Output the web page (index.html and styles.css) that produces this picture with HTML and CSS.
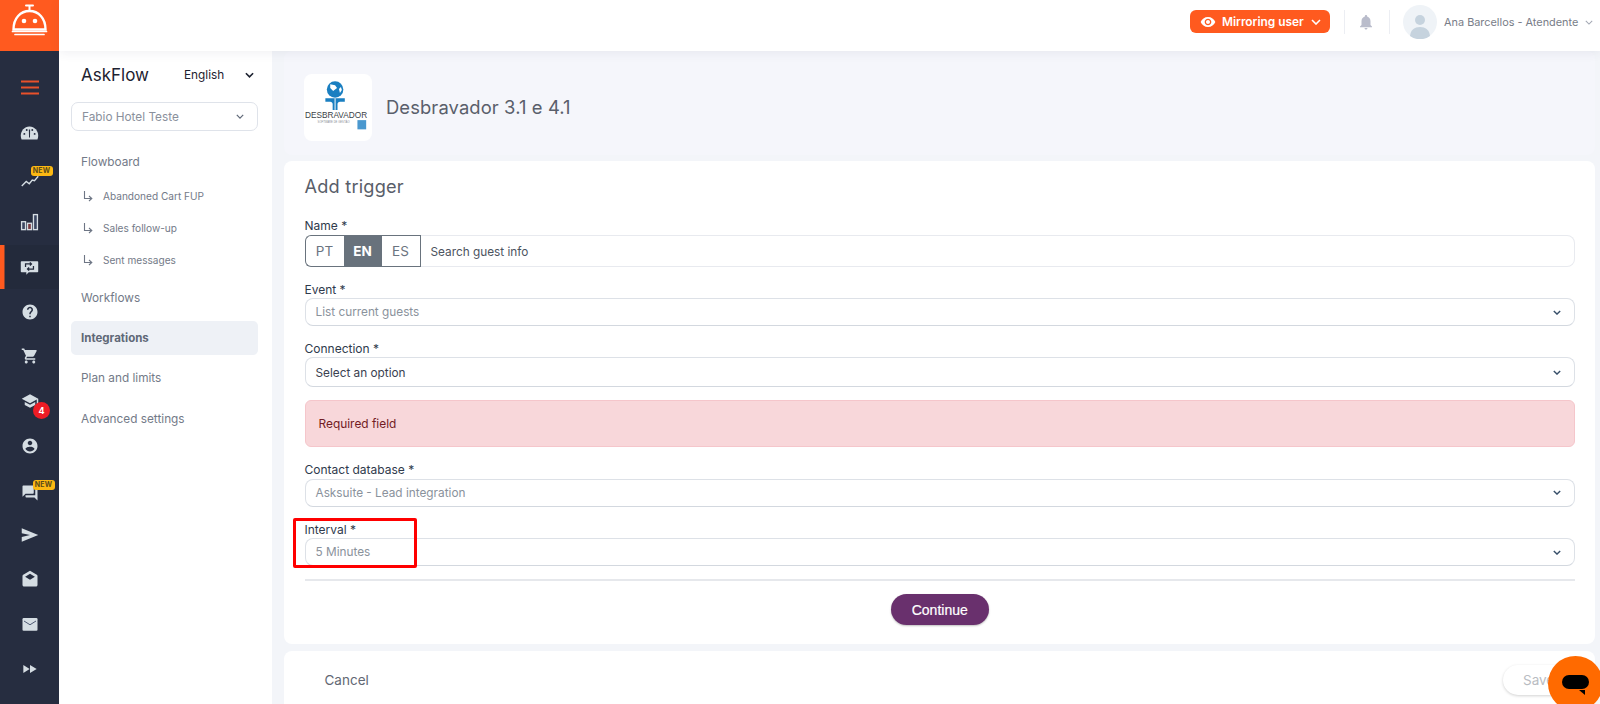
FILE: index.html
```html
<!DOCTYPE html>
<html lang="en">
<head>
<meta charset="utf-8">
<title>AskFlow</title>
<link rel="stylesheet" href="styles.css">
</head>
<body>
<div class="rail">
  <div class="brand">
    <svg width="59" height="51" viewBox="0 0 59 51" fill="none" stroke="#fff">
      <path d="M26 5.500h7M29.500 6v4" stroke-width="2" stroke-linecap="round"/>
      <path d="M13.500 29.500C13.500 18 20.500 11 29.500 11S45.500 18 45.500 29.500z" stroke-width="2.400"/>
      <path d="M12.500 31.500h34M15 34.500h29" stroke-width="1.700" stroke-linecap="round"/>
      <circle cx="24" cy="21" r="2.300" fill="#fff" stroke="none"/>
      <circle cx="35" cy="21" r="2.300" fill="#fff" stroke="none"/>
    </svg>
  </div>
  <nav class="rail-nav">
    <div class="rail-item rail-burger"><svg class="burger" width="18" height="15" viewBox="0 0 18 15"><path d="M0 1.500h18M0 7.500h18M0 13.500h18" stroke="#e8512a" stroke-width="1.800"/></svg></div>
    <div class="rail-item"><svg class="ri ri-big" viewBox="0 0 24 24"><path d="M12 3C5.500 3 1 8.500 1 14.500c0 1.800.4 3.700 1 5h20c.6-1.300 1-3.200 1-5C23 8.500 18.500 3 12 3z" fill="#d5dde3"/><circle cx="5.500" cy="12.500" r="1.200" fill="#262d40"/><circle cx="8.500" cy="7.500" r="1.200" fill="#262d40"/><circle cx="15.500" cy="7.500" r="1.200" fill="#262d40"/><circle cx="18.500" cy="12.500" r="1.200" fill="#262d40"/><path d="M12.800 7l-.2 10h-1.200l-.2-10z" fill="#262d40"/></svg></div>
    <div class="rail-item"><span class="ri-wrap"><svg class="ri ri-down" viewBox="0 0 24 24" fill="none"><path d="M1 20l6-6 4 3 4-5 3 1 5-6" stroke="#d5dde3" stroke-width="1.800"/></svg><span class="new new-a">NEW</span></span></div>
    <div class="rail-item"><svg class="ri ri-big" viewBox="0 0 24 24" fill="none" stroke="#d5dde3" stroke-width="1.700"><rect x="2" y="11" width="5" height="10" fill="#3a4560"/><rect x="9.500" y="13" width="5" height="8" fill="#7a3a40"/><rect x="17" y="2" width="5" height="19" fill="#3a4560"/></svg></div>
    <div class="rail-item rail-active"><svg class="ri ri-big" viewBox="0 0 24 24"><path d="M2 4h20a1 1 0 0 1 1 1v12a1 1 0 0 1-1 1h-11l-3 3v-3H2a1 1 0 0 1-1-1V5a1 1 0 0 1 1-1z" fill="#d5dde3"/><path d="M7 11.500V7.500h7.500M12.500 5.500l2 2-2 2M17 10v4H9.500M11.500 12l-2 2 2 2" fill="none" stroke="#232a3b" stroke-width="1.600"/></svg></div>
    <div class="rail-item"><svg class="ri" viewBox="0 0 24 24"><path fill="#d5dde3" d="M12 2C6.480 2 2 6.480 2 12s4.480 10 10 10 10-4.480 10-10S17.520 2 12 2zm1 17h-2v-2h2v2zm2.070-7.750l-.9.920C13.450 12.900 13 13.500 13 15h-2v-.5c0-1.100.45-2.100 1.170-2.830l1.240-1.260c.37-.36.59-.86.59-1.410 0-1.100-.9-2-2-2s-2 .9-2 2H8c0-2.210 1.790-4 4-4s4 1.790 4 4c0 .88-.36 1.680-.93 2.250z"/></svg></div>
    <div class="rail-item"><svg class="ri" viewBox="0 0 24 24"><path fill="#d5dde3" d="M7 18c-1.100 0-1.990.9-1.990 2S5.900 22 7 22s2-.9 2-2-.9-2-2-2zM1 2v2h2l3.600 7.590-1.350 2.450c-.16.28-.25.61-.25.96 0 1.100.9 2 2 2h12v-2H7.420c-.14 0-.25-.11-.25-.25l.03-.12.9-1.630h7.450c.75 0 1.410-.41 1.750-1.030l3.580-6.490c.08-.14.12-.31.12-.48 0-.55-.45-1-1-1H5.210l-.94-2H1zm16 16c-1.100 0-1.990.9-1.990 2s.89 2 1.990 2 2-.9 2-2-.9-2-2-2z"/></svg></div>
    <div class="rail-item"><span class="ri-wrap"><svg class="ri" viewBox="0 0 24 24"><path fill="#d5dde3" d="M5 13.180v4L12 21l7-3.820v-4L12 17l-7-3.820zM12 3L1 9l11 6 9-4.910V17h2V9L12 3z"/></svg><span class="count">4</span></span></div>
    <div class="rail-item"><svg class="ri" viewBox="0 0 24 24"><path fill="#d5dde3" d="M12 2C6.480 2 2 6.480 2 12s4.480 10 10 10 10-4.480 10-10S17.520 2 12 2zm0 3c1.660 0 3 1.340 3 3s-1.340 3-3 3-3-1.340-3-3 1.340-3 3-3zm0 14.200c-2.500 0-4.710-1.280-6-3.220.03-1.990 4-3.080 6-3.080 1.990 0 5.970 1.090 6 3.080-1.290 1.940-3.500 3.220-6 3.220z"/></svg></div>
    <div class="rail-item"><span class="ri-wrap"><svg class="ri ri-chat" viewBox="0 0 24 24"><path fill="#d5dde3" d="M21 6h-2v9H6v2c0 .55.45 1 1 1h11l4 4V7c0-.55-.45-1-1-1zm-4 6V3c0-.55-.45-1-1-1H3c-.55 0-1 .45-1 1v14l4-4h10c.55 0 1-.45 1-1z"/></svg><span class="new new-b">NEW</span></span></div>
    <div class="rail-item"><svg class="ri" viewBox="0 0 24 24"><path fill="#d5dde3" d="M1 3l22 9L1 21v-6.500L12 12 1 9.500z"/></svg></div>
    <div class="rail-item"><svg class="ri" viewBox="0 0 24 24"><path fill="#d5dde3" d="M22 8c0-.72-.37-1.350-.94-1.700L12 1 2.950 6.300C2.380 6.650 2 7.280 2 8v12c0 1.100.9 2 2 2h16c1.100 0 2-.9 2-2z"/><path fill="#262d40" d="M12 5l6.500 4L12 13 5.500 9z"/></svg></div>
    <div class="rail-item"><svg class="ri" viewBox="0 0 24 24"><rect x="2" y="4" width="20" height="17" rx="1.500" fill="#d5dde3"/><path d="M4 8l8 5 8-5" fill="none" stroke="#4a5570" stroke-width="1.300"/></svg></div>
    <div class="rail-item"><svg class="ri ri-small" viewBox="0 0 24 24"><path fill="#d5dde3" d="M2 18l9.500-6L2 6v12zm10 -12v12l10-6-10-6z"/></svg></div>
  </nav>
</div>

<div class="page">
  <header class="topbar">
    <button class="mirror">
      <svg width="16" height="16" viewBox="0 0 24 24"><path fill="#fff" d="M12 4.500C7 4.500 2.730 7.610 1 12c1.730 4.390 6 7.500 11 7.500s9.270-3.110 11-7.500c-1.730-4.390-6-7.500-11-7.500zM12 17c-2.760 0-5-2.240-5-5s2.240-5 5-5 5 2.240 5 5-2.240 5-5 5zm0-8c-1.660 0-3 1.340-3 3s1.340 3 3 3 3-1.340 3-3-1.340-3-3-3z"/></svg>
      <span>Mirroring user</span>
      <svg class="chev-w" width="10" height="6" viewBox="0 0 10 6" fill="none"><path d="M1 1l4 4 4-4" stroke="#fff" stroke-width="1.600"/></svg>
    </button>
    <span class="vr vr-a"></span>
    <svg class="bell" width="18" height="18" viewBox="0 0 24 24"><path fill="#b9bccb" d="M12 22c1.100 0 2-.9 2-2h-4c0 1.100.9 2 2 2zm6-6v-5c0-3.070-1.630-5.640-4.500-6.320V4c0-.83-.67-1.500-1.500-1.500s-1.500.67-1.500 1.500v.68C7.640 5.360 6 7.920 6 11v5l-2 2v1h16v-1l-2-2z"/></svg>
    <span class="vr vr-b"></span>
    <span class="avatar"><svg width="34" height="34" viewBox="0 0 34 34"><circle cx="17" cy="17" r="17" fill="#eff3f7"/><circle cx="17" cy="15" r="5" fill="#c6d3de"/><path d="M7 31c.5-6 4.500-9 10-9s9.500 3 10 9a17 17 0 0 1-20 0z" fill="#c6d3de"/></svg></span>
    <span class="user">Ana Barcellos - Atendente</span>
    <svg class="chev-u" width="8" height="5" viewBox="0 0 10 6" fill="none"><path d="M1 1l4 4 4-4" stroke="#a3a8b3" stroke-width="1.300"/></svg>
  </header>

  <div class="below">
    <aside class="side">
      <div class="side-top">
        <span class="app">AskFlow</span>
        <span class="lang">English</span>
        <svg width="9" height="6" viewBox="0 0 10 6" fill="none"><path d="M1 1l4 4 4-4" stroke="#1d2230" stroke-width="1.800"/></svg>
      </div>
      <div class="hotel"><span>Fabio Hotel Teste</span><svg width="8" height="5" viewBox="0 0 10 6" fill="none"><path d="M1 1l4 4 4-4" stroke="#5f6877" stroke-width="1.500"/></svg></div>
      <a class="nav nav-first">Flowboard</a>
      <a class="sub"><svg width="10" height="11" viewBox="0 0 10 11" fill="none"><path d="M1.500 0v7.500h7M6 5l2.800 2.500L6 10" stroke="#6e7685" stroke-width="1.100"/></svg><span>Abandoned Cart FUP</span></a>
      <a class="sub"><svg width="10" height="11" viewBox="0 0 10 11" fill="none"><path d="M1.500 0v7.500h7M6 5l2.800 2.500L6 10" stroke="#6e7685" stroke-width="1.100"/></svg><span>Sales follow-up</span></a>
      <a class="sub"><svg width="10" height="11" viewBox="0 0 10 11" fill="none"><path d="M1.500 0v7.500h7M6 5l2.800 2.500L6 10" stroke="#6e7685" stroke-width="1.100"/></svg><span>Sent messages</span></a>
      <a class="nav nav-work">Workflows</a>
      <a class="nav nav-on">Integrations</a>
      <a class="nav">Plan and limits</a>
      <a class="nav nav-adv">Advanced settings</a>
    </aside>

    <main class="main">
      <section class="hero">
        <div class="tile">
          <svg width="68" height="67" viewBox="0 0 70 68">
            <circle cx="32" cy="15.500" r="8.500" fill="#1a7fc1"/>
            <path d="M27 10l5 1 2 3-4 3-3-3zM36 15l2-2 1 3-2 3z" fill="#fff"/>
            <path d="M22 24.500h20v3.500h-5c-1.500 0-2.500 1-2.500 2.500v6h-5v-6c0-1.500-1-2.500-2.500-2.500h-5z" fill="#1a7fc1"/>
            <path d="M32 24.500v12" stroke="#fff" stroke-width="1"/>
            <text class="logo-t" x="1" y="45" textLength="64" lengthAdjust="spacingAndGlyphs">DESBRAVADOR</text>
            <text class="logo-s" x="14" y="50">SOFTWARE DE GESTÃO</text>
            <rect x="55" y="47" width="9" height="9.500" fill="#4a98cf"/>
          </svg>
        </div>
        <h1 class="title">Desbravador 3.1 e 4.1</h1>
      </section>

      <section class="card form">
        <h2 class="form-title">Add trigger</h2>
        <div class="field field-name">
          <label class="lab">Name *</label>
          <div class="langrow">
            <div class="seg"><span class="seg-b">PT</span><span class="seg-b seg-on">EN</span><span class="seg-b">ES</span></div>
            <div class="in-text">Search guest info</div>
          </div>
        </div>
        <div class="field">
          <label class="lab">Event *</label>
          <div class="select muted"><span>List current guests</span><svg class="chev" width="8" height="5" viewBox="0 0 10 6" fill="none"><path d="M1 1l4 4 4-4" stroke="#38506a" stroke-width="1.700"/></svg></div>
        </div>
        <div class="field">
          <label class="lab">Connection *</label>
          <div class="select tall"><span>Select an option</span><svg class="chev" width="8" height="5" viewBox="0 0 10 6" fill="none"><path d="M1 1l4 4 4-4" stroke="#38506a" stroke-width="1.700"/></svg></div>
        </div>
        <div class="alert">Required field</div>
        <div class="field field-low">
          <label class="lab">Contact database *</label>
          <div class="select muted"><span>Asksuite - Lead integration</span><svg class="chev" width="8" height="5" viewBox="0 0 10 6" fill="none"><path d="M1 1l4 4 4-4" stroke="#38506a" stroke-width="1.700"/></svg></div>
        </div>
        <div class="field field-low">
          <label class="lab">Interval *</label>
          <div class="select muted"><span>5 Minutes</span><svg class="chev" width="8" height="5" viewBox="0 0 10 6" fill="none"><path d="M1 1l4 4 4-4" stroke="#38506a" stroke-width="1.700"/></svg></div>
          <span class="mark"></span>
        </div>
        <hr class="rule">
        <div class="actions"><button class="continue">Continue</button></div>
      </section>

      <section class="card foot">
        <button class="cancel">Cancel</button>
        <button class="save">Save</button>
      </section>
    </main>
  </div>
</div>

<div class="chat"><svg width="31" height="22" viewBox="0 0 31 22"><rect x="1" y="0" width="27" height="14" rx="7" fill="#000"/><path d="M18 15h6v5z" fill="#000"/></svg></div>
</body>
</html>
```
FILE: styles.css
```css
* { box-sizing: border-box; }
html, body { margin: 0; height: 704px; overflow: hidden; }
body {
  display: flex;
  font-family: Inter, "Liberation Sans", sans-serif;
  background: #f3f5f9;
  color: #3a4150;
  position: relative;
}

/* left rail */
.rail { width: 59px; flex: none; background: #262d40; height: 704px; }
.brand { height: 51px; background: #ff5a1f; display: block; }
.brand svg { display: block; }
.rail-nav { padding-top: 14px; }
.rail-item { height: 44.6px; display: flex; align-items: center; justify-content: center; position: relative; }
.rail-burger { margin-bottom: 1.500px; }
.rail-active { background: #232a3b; box-shadow: inset 4.500px 0 0 #ff5a1f; }
.ri { width: 18px; height: 18px; display: block; }
.ri-big { width: 19px; height: 19px; }
.ri-small { width: 16px; height: 16px; }
.ri-down { transform: translateY(2px); }
.ri-chat { transform: translateY(3px); }
.ri-wrap { position: relative; display: block; }
.new {
  position: absolute;
  background: #fdb913;
  color: #5a4a1a;
  font-size: 7px;
  font-weight: 700;
  line-height: 10px;
  height: 10px;
  width: 22px;
  text-align: center;
  border-radius: 3px;
  letter-spacing: .2px;
}
.new-a { left: 10px; top: -3px; }
.new-b { left: 12px; top: -1px; }
.count {
  position: absolute;
  left: 12.500px;
  top: 10.500px;
  width: 17px;
  height: 17px;
  border-radius: 50%;
  background: #ee1c25;
  color: #fff;
  font-size: 9px;
  font-weight: 700;
  line-height: 17px;
  text-align: center;
}

/* page */
.page { flex: 1; min-width: 0; display: flex; flex-direction: column; }
.topbar {
  height: 51px;
  flex: none;
  background: #fff;
  display: flex;
  align-items: center;
  padding-left: 1131px;
  box-shadow: 0 2px 10px rgba(60, 70, 100, .08);
  position: relative;
  z-index: 1;
}
.mirror {
  width: 140px;
  height: 23px;
  margin-top: -8px;
  border: 0;
  border-radius: 6px;
  background: #ff5a1f;
  color: #fff;
  font: 600 11.900px Inter, "Liberation Sans", sans-serif;
  display: flex;
  align-items: center;
  padding: 0 0 0 10px;
}
.mirror span { margin-left: 6px; }
.chev-w { margin-left: 7px; }
.vr { width: 1px; height: 24px; background: #eceef3; margin-top: -8px; }
.vr-a { margin-left: 14px; }
.bell { margin-left: 12px; margin-top: -8px; }
.vr-b { margin-left: 14px; }
.avatar { margin-left: 13px; height: 34px; margin-top: -8px; }
.avatar svg { display: block; }
.user { margin-left: 7px; margin-top: -8px; font-size: 10.900px; color: #787d88; white-space: nowrap; }
.chev-u { margin-left: 7px; margin-top: -7px; }

.below { flex: 1; display: flex; min-height: 0; }

/* secondary sidebar */
.side { width: 213px; flex: none; background: #fff; padding: 12px 14px 0 12px; }
.side-top { display: flex; align-items: center; height: 24px; padding-left: 10px; }
.app { font-size: 17px; font-weight: 400; color: #1d2230; width: 103px; }
.lang { font-size: 11.800px; color: #1d2230; width: 61px; }
.hotel {
  margin-top: 15px;
  height: 29px;
  border: 1px solid #dfe3ea;
  border-radius: 7px;
  display: flex;
  align-items: center;
  justify-content: space-between;
  padding: 0 13px 0 10px;
  font-size: 11.800px;
  color: #8a909c;
}
.nav {
  display: flex;
  align-items: center;
  height: 34px;
  padding-left: 10px;
  border-radius: 5px;
  font-size: 11.800px;
  color: #737a88;
  margin-top: 6px;
}
.nav-first { margin-top: 14px; margin-bottom: 1px; }
.nav-work { margin-top: 5px; }
.nav-on { background: #eef1f6; color: #5f6877; font-weight: 700; font-size: 11.500px; }
.nav-adv { margin-top: 7px; }
.sub {
  display: flex;
  align-items: center;
  height: 32px;
  padding-left: 12px;
  font-size: 10.100px;
  color: #737a88;
}
.sub span { margin-left: 10px; }

/* main */
.main { flex: 1; min-width: 0; padding: 0 5px 0 12px; }
.hero { height: 104px; display: flex; align-items: center; padding: 19px 0 11px 20px; background: #f5f6fb; border-radius: 8px; margin-bottom: 6px; }
.tile { width: 68px; height: 67px; background: #fff; border-radius: 8px; flex: none; }
.tile svg { display: block; }
.logo-t { font: 8.800px "Liberation Sans", sans-serif; fill: #3b3f48; }
.logo-s { font: 2.800px "Liberation Sans", sans-serif; fill: #8a8e96; }
.title { margin: 0 0 0 14px; font-size: 18.400px; font-weight: 400; color: #5a5f6b; letter-spacing: .1px; }

.card { background: #fff; border-radius: 8px; }
.form { height: 483px; padding: 13px 20px 0 20.500px; margin-bottom: 7px; }
.form-title { margin: 0 0 20px; font-size: 18.200px; line-height: 24px; font-weight: 400; color: #595e69; letter-spacing: .2px; }
.field { position: relative; margin-top: 15px; }
.field-name { margin-top: 0; }
.field-low .lab { margin-bottom: .5px; }
.lab { display: block; font-size: 12px; line-height: 16px; color: #2f3a4c; }
.field-name .lab { margin-bottom: 1px; }
.langrow { display: flex; height: 32px; }
.seg { display: flex; border: 1px solid #69737d; border-right: 0; border-radius: 6px 0 0 6px; overflow: hidden; width: 116px; flex: none; }
.seg-b { flex: 1; display: flex; align-items: center; justify-content: center; font-size: 13.500px; color: #6b7480; }
.seg-on { background: #68727c; color: #fff; font-weight: 700; }
.seg-b:nth-child(3) { border-right: 1px solid #69737d; }
.in-text {
  flex: 1;
  border: 1px solid #e8eaef;
  border-left: 0;
  border-radius: 0 8px 8px 0;
  padding: 1px 0 0 10px;
  display: flex;
  align-items: center;
  font-size: 11.800px;
  color: #4c5360;
}
.select {
  height: 28px;
  border: 1px solid #dde1e7;
  border-bottom-color: #d3d8df;
  border-radius: 8px;
  display: flex;
  align-items: center;
  justify-content: space-between;
  padding: 0 13px 0 10px;
  font-size: 11.800px;
  color: #3a4150;
}
.tall { height: 30px; padding-top: 1px; }
.muted { color: #8a929c; }
.alert {
  margin-top: 13px;
  height: 47px;
  background: #f8d7da;
  border: 1px solid #f5c6cb;
  border-radius: 6px;
  display: flex;
  align-items: center;
  padding-left: 13px;
  font-size: 11.900px;
  color: #721c24;
}
.mark {
  position: absolute;
  left: -12px;
  top: -4px;
  width: 124px;
  height: 50px;
  border: 3px solid #f00;
  border-radius: 2px;
}
.rule { margin: 13px 0 0; border: 0; height: 2px; background: #e6e8ec; }
.actions { display: flex; justify-content: center; margin-top: 13px; }
.continue {
  width: 98px;
  height: 31px;
  border: 0;
  border-radius: 16px;
  background: #69306d;
  color: #fff;
  font: 500 14px "Liberation Sans", sans-serif;
  -webkit-text-stroke: .2px #fff;
  box-shadow: 0 1px 2px rgba(0, 0, 0, .25);
}
.foot { height: 60px; display: flex; align-items: flex-start; justify-content: space-between; padding: 14px 20px 0 40.500px; }
.cancel { border: 0; background: none; height: 30px; padding: 0; font: 13.500px Inter, "Liberation Sans", sans-serif; color: #626873; }
.save {
  width: 72px;
  height: 30px;
  border: 0;
  border-radius: 15px;
  background: #fff;
  box-shadow: 0 1px 3px rgba(0, 0, 0, .18);
  font: 13.500px Inter, "Liberation Sans", sans-serif;
  color: #b9bcc2;
  text-align: left;
  padding-left: 20px;
}

/* floating chat */
.chat {
  position: absolute;
  left: 1548px;
  top: 656px;
  width: 55px;
  height: 55px;
  border-radius: 50%;
  background: #ff6a00;
  padding: 19px 0 0 13px;
}
.chat svg { display: block; }
```
